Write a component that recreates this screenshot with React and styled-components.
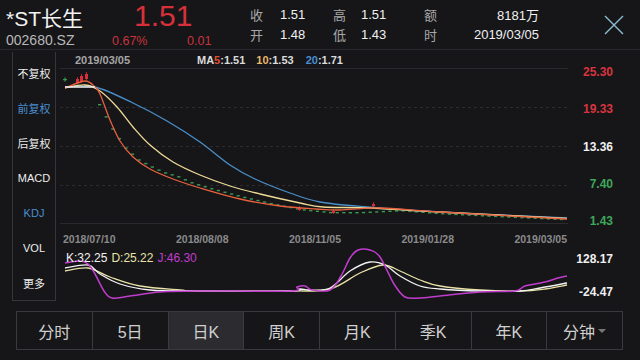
import React from "react";
import styled, { createGlobalStyle } from "styled-components";

const FONT = `"Liberation Sans", "Noto Sans CJK SC", sans-serif`;

const GlobalStyle = createGlobalStyle`
  html, body { margin: 0; padding: 0; background: #161619; }
  body { font-family: ${FONT}; }
`;

const Page = styled.div`
  width: 640px;
  height: 360px;
  background: #161619;
  display: flex;
  flex-direction: column;
  overflow: hidden;
  color: #e6e6e6;
`;

const Header = styled.header`
  height: 50px;
  display: flex;
  border-bottom: 1px solid #2a2a2e;
  box-sizing: border-box;
`;

const Quote = styled.div`
  display: flex;
  flex-direction: column;
  padding-left: 6px;
  width: 244px;
`;

const QuoteRow = styled.div`
  display: flex;
  align-items: baseline;
  height: ${(p) => p.$h}px;
`;

const Name = styled.div`
  width: 128px;
  font-size: 21px;
  line-height: 32px;
  color: #f2f2f2;
`;

const Price = styled.div`
  font-size: 30px;
  line-height: 32px;
  color: #d8303a;
`;

const Small = styled.div`
  width: ${(p) => p.$w || "auto"};
  font-size: ${(p) => p.$size || 13}px;
  color: ${(p) => p.$color || "#b8b8b8"};
`;

const Stats = styled.div`
  display: grid;
  grid-template-columns: 30px 53px 28px 63px 16px 99px;
  grid-auto-rows: 20px;
  margin-top: 4px;
  font-size: 13px;
  align-items: center;
`;

const StatLabel = styled.span`
  color: #a8a8a8;
`;

const StatValue = styled.span`
  color: #f0f0f0;
  text-align: ${(p) => (p.$right ? "right" : "left")};
`;

const Close = styled.button`
  margin: 14px 0 0 65px;
  width: 20px;
  height: 22px;
  padding: 0;
  background: none;
  border: none;
`;

const Body = styled.div`
  display: flex;
  height: 251px;
`;

const Sidebar = styled.nav`
  margin: 2px 0 0 12px;
  width: 44px;
  height: 249px;
  box-sizing: border-box;
  border: 1px solid #36363a;
  border-top: none;
  padding-top: 4px;
  display: flex;
  flex-direction: column;
`;

const SideItem = styled.div`
  height: 35.4px;
  display: flex;
  align-items: center;
  justify-content: center;
  font-size: 11px;
  color: ${(p) => (p.$active ? "#4a8fd0" : "#ececec")};
`;

const ChartCol = styled.div`
  margin-left: 4px;
  width: 510px;
  display: flex;
  flex-direction: column;
`;

const LegendRow = styled.div`
  height: 18px;
  display: flex;
  align-items: center;
  padding: 2px 0 0 15px;
  box-sizing: border-box;
  font-size: 11px;
  font-weight: bold;
`;

const DateText = styled.span`
  color: #a6a6a6;
  width: 122px;
`;

const MaItem = styled.span`
  color: #dcdcdc;
  margin-right: ${(p) => p.$gap}px;
`;

const Tint = styled.span`
  color: ${(p) => p.$c};
`;

const DateAxis = styled.div`
  height: 24px;
  display: flex;
  justify-content: space-between;
  align-items: center;
  padding: 5px 3px 0 3px;
  box-sizing: border-box;
  font-size: 10.5px;
  font-weight: bold;
  color: #8a8a8a;
`;

const KdjPanel = styled.div`
  position: relative;
  height: 53px;
`;

const KdjLegend = styled.div`
  position: absolute;
  left: 6px;
  top: 3px;
  font-size: 12px;
  display: flex;
  gap: 4px;
`;

const AxisCol = styled.div`
  flex: 1;
  display: flex;
  flex-direction: column;
  padding-right: 27px;
  font-size: 12px;
  font-weight: bold;
  text-align: right;
`;

const AxisBox = styled.div`
  margin-top: ${(p) => p.$top}px;
  height: ${(p) => p.$h}px;
  display: flex;
  flex-direction: column;
  justify-content: space-between;
  padding: ${(p) => p.$pad || "0"};
  box-sizing: border-box;
`;

const AxisLabel = styled.div`
  line-height: 12px;
  color: ${(p) => p.$c};
`;

const Tabs = styled.div`
  margin: 10px 17px 0 16px;
  height: 39px;
  display: flex;
  border: 1px solid #3a3a3e;
  box-sizing: border-box;
`;

const Tab = styled.div`
  flex: 1;
  display: flex;
  align-items: center;
  justify-content: center;
  font-size: 16px;
  color: #d0d0d0;
  background: ${(p) => (p.$active ? "#2c2c30" : "transparent")};
  border-left: ${(p) => (p.$first ? "none" : "1px solid #3a3a3e")};
`;

const Caret = styled.span`
  margin-left: 3px;
  width: 0;
  height: 0;
  border-left: 4px solid transparent;
  border-right: 4px solid transparent;
  border-top: 4px solid #777;
`;

const smooth = (pts) =>
  pts.reduce((d, p, i, a) => {
    if (i === 0) return `M${p[0]},${p[1]}`;
    const p0 = a[i - 2] || a[i - 1];
    const p1 = a[i - 1];
    const p3 = a[i + 1] || p;
    const c1 = [p1[0] + (p[0] - p0[0]) / 6, p1[1] + (p[1] - p0[1]) / 6];
    const c2 = [p[0] - (p3[0] - p1[0]) / 6, p[1] - (p3[1] - p1[1]) / 6];
    return `${d} C${c1} ${c2} ${p}`;
  }, "");

const lerp = (pts, x) => {
  for (let i = 1; i < pts.length; i++) {
    if (x <= pts[i][0]) {
      const [x0, y0] = pts[i - 1];
      const [x1, y1] = pts[i];
      return y0 + ((y1 - y0) * (x - x0)) / (x1 - x0);
    }
  }
  return pts[pts.length - 1][1];
};

const MA20 = [[65, 88], [95, 88], [133, 104], [167, 122], [200, 143], [230, 166], [255, 180], [290, 194], [320, 203], [367, 208], [440, 213], [500, 216], [567, 219]];
const MA10 = [[65, 89], [85, 86], [100, 92], [117, 108], [133, 128], [150, 146], [173, 163], [200, 176], [230, 187], [260, 195], [300, 204], [323, 208], [370, 209], [440, 213], [567, 219.5]];
const MA5 = [[65, 89], [85, 82], [95, 88], [100, 95], [110, 121], [120, 142], [133, 158], [150, 170], [173, 180], [200, 189], [240, 200], [280, 207], [316, 210], [340, 211], [380, 209], [440, 213], [567, 220]];
const BASE = [[65, 88], [95, 88]];
const DASH_PATH = [[98, 104], [111, 128], [124, 147], [137, 159], [150, 166], [163, 172], [177, 176], [190, 182], [210, 188], [240, 196], [270, 203], [300, 209], [330, 212], [360, 212], [400, 210], [440, 213], [500, 216], [565, 219]];
const dashes = Array.from({ length: 71 }, (_, i) => 98 + i * 6.6).map((x) => [x, lerp(DASH_PATH, x) + 1]);
const redCandles = [[76, 80, 4], [80, 77, 6], [85, 75, 5], [298, 209, 2], [332, 212, 2], [372, 205, 2]];

const J = [[65, 264], [80, 262], [88, 265], [95, 275], [104, 292], [112, 299], [130, 297], [160, 293], [200, 292], [290, 292], [297, 288], [305, 287], [312, 291], [330, 291], [341, 277], [350, 259], [358, 251], [370, 251], [380, 258], [394, 285], [405, 298], [420, 299], [440, 297], [480, 293], [515, 292], [525, 287], [545, 283], [558, 279], [567, 277]];
const K = [[65, 269], [88, 266], [100, 275], [120, 285], [150, 291], [200, 292], [290, 292], [300, 290], [310, 291], [330, 289], [350, 272], [370, 263], [385, 266], [400, 277], [420, 287], [440, 290], [480, 292], [520, 292], [540, 289], [567, 284]];
const D = [[65, 272], [88, 269], [110, 278], [140, 287], [180, 291], [200, 292], [290, 292], [330, 290], [360, 274], [383, 266], [400, 272], [420, 281], [440, 287], [480, 291], [520, 292], [545, 290], [567, 286]];

const PriceChart = () => (
  <svg width="510" height="156" viewBox="60 69 510 156" style={{ display: "block" }}>
    <line x1="60" x2="568" y1="69.5" y2="69.5" stroke="#2a2a2e" />
    {[108.5, 147.5, 186.5].map((y) => (
      <line key={y} x1="60" x2="568" y1={y} y2={y} stroke="#2c2c30" strokeDasharray="3 3" />
    ))}
    <line x1="60" x2="568" y1="224.5" y2="224.5" stroke="#2a2a2e" />
    {dashes.map(([x, y]) => (
      <rect key={x} x={x} y={y} width="3.2" height="1.4" fill="#3a9a52" />
    ))}
    <rect x="63" y="80" width="4" height="1.2" fill="#3a9a52" />
    <rect x="64.4" y="78.5" width="1.2" height="4" fill="#3a9a52" />
    {redCandles.map(([x, y, h]) => (
      <g key={x}>
        <rect x={x} y={y} width="3" height={h} fill="#d8303a" />
        <line x1={x + 1.5} x2={x + 1.5} y1={y - 2} y2={y + h + 1} stroke="#d8303a" strokeWidth="0.8" />
      </g>
    ))}
    <path d={smooth(MA20)} fill="none" stroke="#4a8fc8" strokeWidth="1.3" />
    <path d={smooth(MA10)} fill="none" stroke="#efdb95" strokeWidth="1.3" />
    <path d={smooth(MA5)} fill="none" stroke="#e8603e" strokeWidth="1.3" />
    <path d={smooth(BASE)} fill="none" stroke="#e8e8e8" strokeWidth="1.6" />
  </svg>
);

const KdjChart = () => (
  <svg width="510" height="53" viewBox="60 249 510 53" style={{ display: "block" }}>
    <path d={smooth(D)} fill="none" stroke="#e8e2a6" strokeWidth="1.3" />
    <path d={smooth(K)} fill="none" stroke="#f2f2f2" strokeWidth="1.3" />
    <path d={smooth(J)} fill="none" stroke="#c03ccc" strokeWidth="1.5" />
  </svg>
);

const SIDE = [
  ["不复权"],
  ["前复权", true],
  ["后复权"],
  ["MACD"],
  ["KDJ", true],
  ["VOL"],
  ["更多"],
];

const TABS = ["分时", "5日", "日K", "周K", "月K", "季K", "年K"];

export default function App() {
  return (
    <Page>
      <GlobalStyle />
      <Header>
        <Quote>
          <QuoteRow $h={32}>
            <Name>*ST长生</Name>
            <Price>1.51</Price>
          </QuoteRow>
          <QuoteRow $h={17}>
            <Small $w="106px" $size={14}>002680.SZ</Small>
            <Small $w="75px" $size={12.5} $color="#c8343c">0.67%</Small>
            <Small $size={12.5} $color="#c8343c">0.01</Small>
          </QuoteRow>
        </Quote>
        <Stats>
          <StatLabel>收</StatLabel>
          <StatValue>1.51</StatValue>
          <StatLabel>高</StatLabel>
          <StatValue>1.51</StatValue>
          <StatLabel>额</StatLabel>
          <StatValue $right>8181万</StatValue>
          <StatLabel>开</StatLabel>
          <StatValue>1.48</StatValue>
          <StatLabel>低</StatLabel>
          <StatValue>1.43</StatValue>
          <StatLabel>时</StatLabel>
          <StatValue $right>2019/03/05</StatValue>
        </Stats>
        <Close aria-label="close">
          <svg width="20" height="22" viewBox="0 0 20 22">
            <path d="M1 2 L19 20 M19 2 L1 20" stroke="#8cbfcf" strokeWidth="1.4" fill="none" />
          </svg>
        </Close>
      </Header>

      <Body>
        <Sidebar>
          {SIDE.map(([label, active]) => (
            <SideItem key={label} $active={active}>{label}</SideItem>
          ))}
        </Sidebar>

        <ChartCol>
          <LegendRow>
            <DateText>2019/03/05</DateText>
            <MaItem $gap={11}>MA<Tint $c="#e05038">5</Tint>:1.51</MaItem>
            <MaItem $gap={12}><Tint $c="#e8b868">10</Tint>:1.53</MaItem>
            <MaItem $gap={0}><Tint $c="#4a8fd0">20</Tint>:1.71</MaItem>
          </LegendRow>
          <PriceChart />
          <DateAxis>
            <span>2018/07/10</span>
            <span>2018/08/08</span>
            <span>2018/11/05</span>
            <span>2019/01/28</span>
            <span>2019/03/05</span>
          </DateAxis>
          <KdjPanel>
            <KdjChart />
            <KdjLegend>
              <Tint $c="#f2f2f2">K:32.25</Tint>
              <Tint $c="#e8e2a6">D:25.22</Tint>
              <Tint $c="#c03ccc">J:46.30</Tint>
            </KdjLegend>
          </KdjPanel>
        </ChartCol>

        <AxisCol>
          <AxisBox $top={16} $h={161}>
            <AxisLabel $c="#d8343e">25.30</AxisLabel>
            <AxisLabel $c="#d8343e">19.33</AxisLabel>
            <AxisLabel $c="#f0f0f0">13.36</AxisLabel>
            <AxisLabel $c="#3ea85a">7.40</AxisLabel>
            <AxisLabel $c="#3ea85a">1.43</AxisLabel>
          </AxisBox>
          <AxisBox $top={21} $h={53} $pad="5px 0 3px">
            <AxisLabel $c="#f0f0f0">128.17</AxisLabel>
            <AxisLabel $c="#f0f0f0">-24.47</AxisLabel>
          </AxisBox>
        </AxisCol>
      </Body>

      <Tabs>
        {TABS.map((t, i) => (
          <Tab key={t} $first={i === 0} $active={t === "日K"}>{t}</Tab>
        ))}
        <Tab>分钟<Caret /></Tab>
      </Tabs>
    </Page>
  );
}
